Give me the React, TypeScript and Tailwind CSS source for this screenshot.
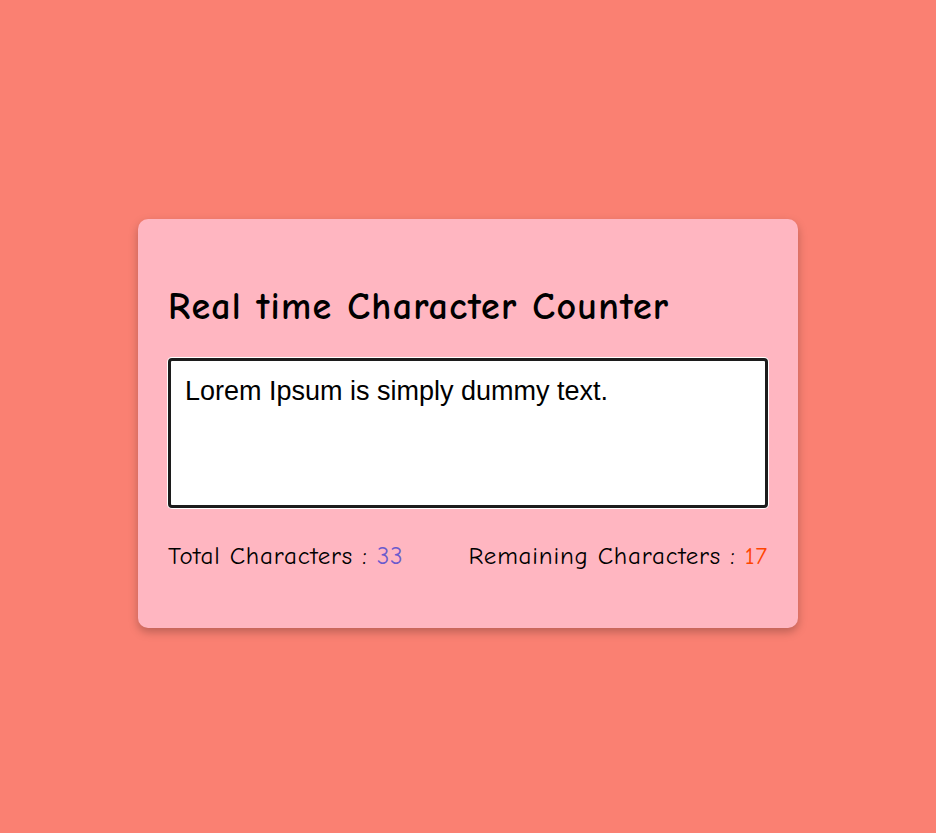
import { useEffect, useRef, useState } from 'react';

const LIMIT = 50;

export default function App() {
  const [text, setText] = useState('Lorem Ipsum is simply dummy text.');
  const boxRef = useRef<HTMLTextAreaElement>(null);

  useEffect(() => {
    const el = boxRef.current;
    if (!el) return;
    el.focus();
    el.setSelectionRange(el.value.length, el.value.length);
  }, []);

  return (
    <div className="min-h-screen flex items-center justify-center bg-[#fa8072] pt-[13px]" style={{ fontFamily: '"Comic Sans MS", "Comic Neue", cursive' }}>
      <div className="w-[660px] rounded-[10px] bg-[#ffb6c1] px-[30px] pt-[66px] pb-[58px] shadow-[0_4px_10px_rgba(0,0,0,0.25)]">
        <h1 className="text-[38px] font-bold leading-[44px] tracking-[1.25px] text-black">Real time Character Counter</h1>

        <textarea
          ref={boxRef}
          value={text}
          maxLength={LIMIT}
          onChange={e => setText(e.target.value)}
          className="mt-[29px] block h-[150px] w-full resize-none rounded-[4px] border-[3px] border-[#1c1c1c] bg-white px-[14px] pt-[15px] pb-[8px] text-[27px] leading-[31px] text-black outline-none shadow-[0_0_0_1px_#ffffff]"
          style={{ fontFamily: '"Liberation Sans", Arial, sans-serif' }}
        />

        <div className="mt-[34px] flex justify-between text-[25px] leading-[28px] tracking-[0.8px] text-black">
          <div>
            Total Characters : <span className="text-[#6a5acd]">{text.length}</span>
          </div>
          <div>
            Remaining Characters : <span className="text-[#ff4500]">{LIMIT - text.length}</span>
          </div>
        </div>
      </div>
    </div>
  );
}
